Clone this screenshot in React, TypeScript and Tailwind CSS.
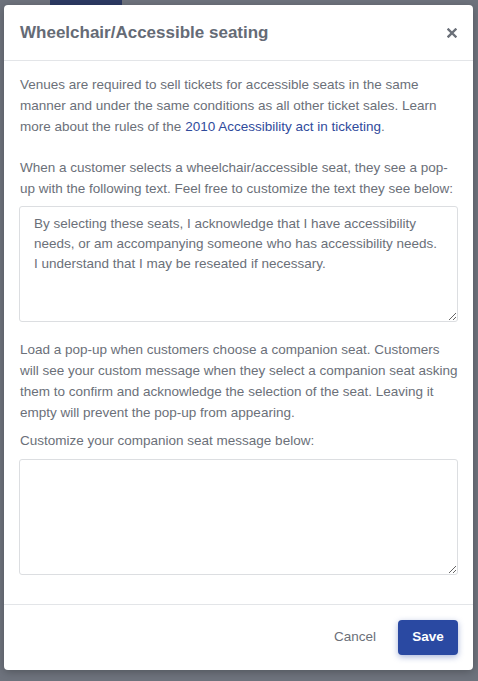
import React from "react";

export default function App() {
  return (
    <div
      className="relative h-[681px] w-[478px] overflow-hidden bg-[#6e737d] pl-[4px] pt-[5px]"
      style={{ fontFamily: '"Liberation Sans", Arial, sans-serif' }}
    >
      <div className="absolute left-[50px] top-0 h-[5px] w-[72px] bg-[#2c3a63]" />
      <div className="relative flex h-[665px] w-[469px] flex-col rounded-[4px] bg-white shadow-[0_2px_8px_rgba(0,0,0,0.25)]">
        <div className="flex h-[56px] items-center justify-between border-b border-[#e3e5e8] pl-[16px] pr-[13px]">
          <h2 className="text-[17px] font-bold leading-none text-[#656b76]">
            Wheelchair/Accessible seating
          </h2>
          <button className="flex h-[16px] w-[16px] items-center justify-center text-[#6b7079]">
            <svg width="10" height="10" viewBox="0 0 10 10">
              <path d="M1.5 1.5 L8.5 8.5 M8.5 1.5 L1.5 8.5" stroke="currentColor" strokeWidth="2.4" strokeLinecap="square" />
            </svg>
          </button>
        </div>
        <div className="flex flex-1 flex-col px-[15px] pt-[13px] text-[13.5px] leading-[21px] text-[#6b7079]">
          <p className="mb-[20px] pl-[1px]">
            Venues are required to sell tickets for accessible seats in the same manner and under the same conditions as all
            other ticket sales. Learn more about the rules of the{" "}
            <a className="text-[#2f4b9c]">2010 Accessibility act in ticketing</a>.
          </p>
          <p className="mb-[7px] pl-[1px]">
            When a customer selects a wheelchair/accessible seat, they see a pop-up with the following text. Feel free to
            customize the text they see below:
          </p>
          <textarea
            className="block h-[116px] w-full resize-y rounded-[3px] border border-[#dcdee1] px-[14px] py-[7px] text-[13.5px] leading-[20px] text-[#6b7079] outline-none"
            style={{ fontFamily: '"Liberation Sans", Arial, sans-serif' }}
            defaultValue="By selecting these seats, I acknowledge that I have accessibility needs, or am accompanying someone who has accessibility needs. I understand that I may be reseated if necessary."
          />
          <p className="mb-[7px] mt-[17px] pl-[1px]">
            Load a pop-up when customers choose a companion seat. Customers will see your custom message when they select a
            companion seat asking them to confirm and acknowledge the selection of the seat. Leaving it empty will prevent
            the pop-up from appearing.
          </p>
          <p className="mb-[8px] pl-[1px]">Customize your companion seat message below:</p>
          <textarea
            className="block h-[116px] w-full resize-y rounded-[3px] border border-[#dcdee1] px-[14px] py-[7px] text-[13.5px] leading-[20px] text-[#6b7079] outline-none"
            style={{ fontFamily: '"Liberation Sans", Arial, sans-serif' }}
          />
        </div>
        <div className="flex h-[66px] items-center justify-end gap-[22px] border-t border-[#e3e5e8] pr-[15px]">
          <button className="text-[13.5px] text-[#6b7079]">Cancel</button>
          <button className="h-[35px] w-[60px] rounded-[4px] bg-[#2a49a2] text-[13.5px] font-bold text-white shadow-[0_2px_6px_rgba(42,73,162,0.4)]">
            Save
          </button>
        </div>
      </div>
    </div>
  );
}
